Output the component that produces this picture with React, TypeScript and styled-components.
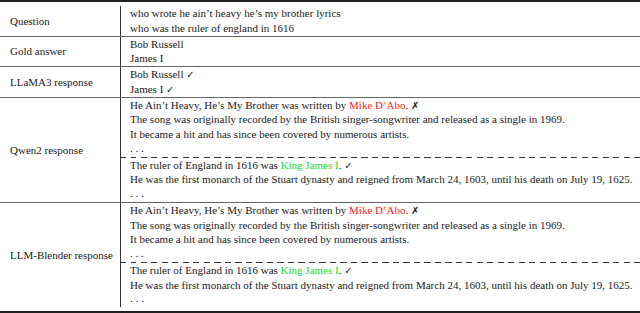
import React from "react";
import styled, { createGlobalStyle } from "styled-components";

const Global = createGlobalStyle`
  html, body { margin: 0; padding: 0; background: #fff; }
  body { font-family: "Liberation Serif", "Times New Roman", serif; color: #1a1a1a; }
`;

const Table = styled.div`
  width: 640px;
  border-top: 2px solid #222;
  border-bottom: 2px solid #222;
  padding: 4px 0;
  box-sizing: border-box;
  font-family: "Liberation Serif", "Times New Roman", serif;
  font-size: 11px;
  color: #1a1a1a;
`;

const Row = styled.div<{ $last?: boolean }>`
  display: grid;
  grid-template-columns: 121px 1fr;
  border-bottom: ${(p) => (p.$last ? "none" : "1px solid #666")};
`;

const LabelCell = styled.div`
  display: flex;
  align-items: center;
  padding-left: 10px;
  border-right: 1px solid #333;
  font-family: "Liberation Serif", "Times New Roman", serif;
  font-size: 11px;
  white-space: nowrap;
`;

const ContentCell = styled.div`
  padding-left: 9px;
  font-family: "Liberation Serif", "Times New Roman", serif;
  font-size: 11px;
`;

const Line = styled.div`
  height: 14.75px;
  line-height: 14.75px;
  white-space: nowrap;
`;

const Dashed = styled.div`
  height: 1px;
  margin-left: -10px;
  background: repeating-linear-gradient(
    to right,
    #333 0,
    #333 6px,
    transparent 6px,
    transparent 10.5px
  );
`;

const Hl = styled.span<{ $tone: "red" | "green" }>`
  color: ${(p) => (p.$tone === "red" ? "#ff1a1a" : "#22dd22")};
`;

const Mark = styled.span`
  font-family: "DejaVu Sans", sans-serif;
  font-size: 10px;
  color: #222;
`;

const Dots = styled(Line)`
  line-height: 12px;
`;

function ResponseLines() {
  return (
    <>
      <Line>
        He Ain’t Heavy, He’s My Brother was written by <Hl $tone="red">Mike D’Abo</Hl>. <Mark>✗</Mark>
      </Line>
      <Line>The song was originally recorded by the British singer-songwriter and released as a single in 1969.</Line>
      <Line>It became a hit and has since been covered by numerous artists.</Line>
      <Dots>. . .</Dots>
      <Dashed />
      <Line>
        The ruler of England in 1616 was <Hl $tone="green">King James I</Hl>. <Mark>✓</Mark>
      </Line>
      <Line>He was the first monarch of the Stuart dynasty and reigned from March 24, 1603, until his death on July 19, 1625.</Line>
      <Dots>. . .</Dots>
    </>
  );
}

export default function App() {
  return (
    <>
      <Global />
      <Table>
        <Row>
          <LabelCell>Question</LabelCell>
          <ContentCell>
            <Line>who wrote he ain’t heavy he’s my brother lyrics</Line>
            <Line>who was the ruler of england in 1616</Line>
          </ContentCell>
        </Row>
        <Row>
          <LabelCell>Gold answer</LabelCell>
          <ContentCell>
            <Line>Bob Russell</Line>
            <Line>James I</Line>
          </ContentCell>
        </Row>
        <Row>
          <LabelCell>LLaMA3 response</LabelCell>
          <ContentCell>
            <Line>Bob Russell <Mark>✓</Mark></Line>
            <Line>James I <Mark>✓</Mark></Line>
          </ContentCell>
        </Row>
        <Row>
          <LabelCell>Qwen2 response</LabelCell>
          <ContentCell>
            <ResponseLines />
          </ContentCell>
        </Row>
        <Row $last>
          <LabelCell>LLM-Blender response</LabelCell>
          <ContentCell>
            <ResponseLines />
          </ContentCell>
        </Row>
      </Table>
    </>
  );
}
